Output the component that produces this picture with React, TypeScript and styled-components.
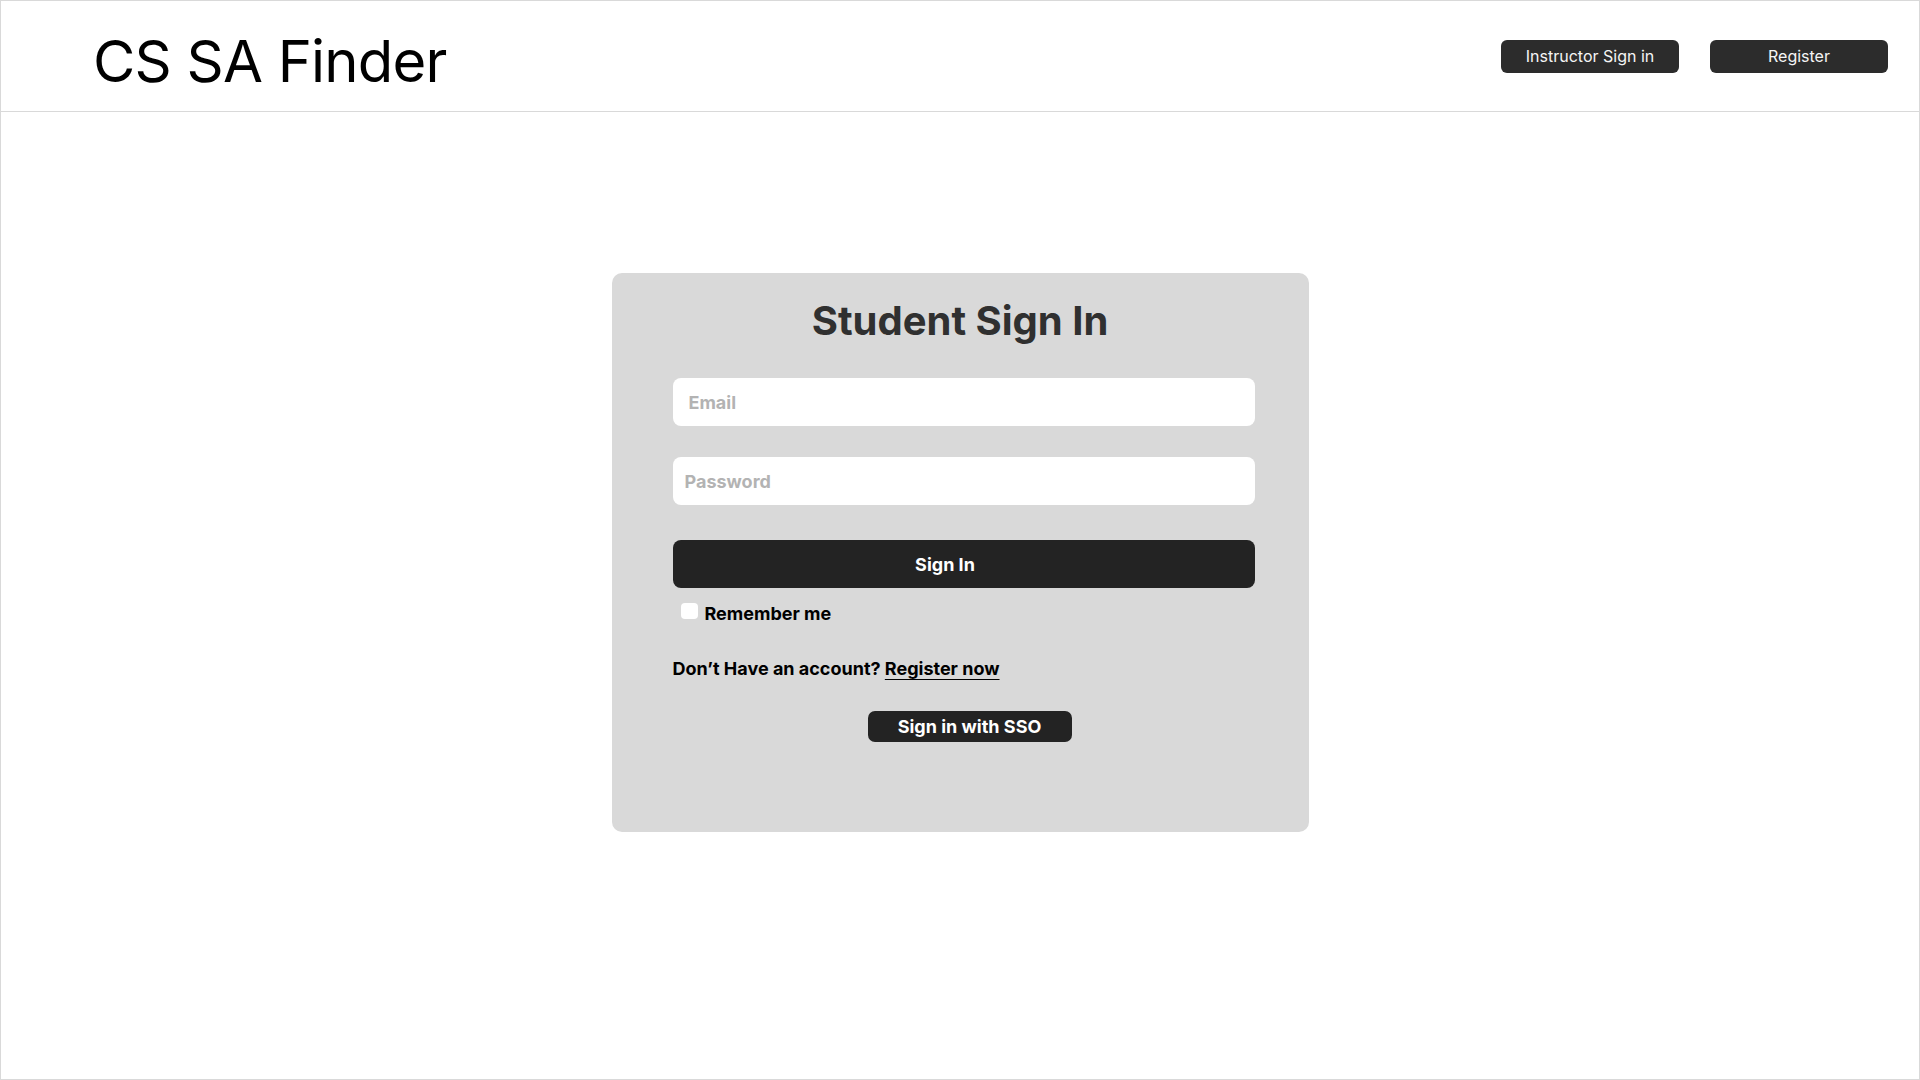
import React from "react";
import styled, { createGlobalStyle } from "styled-components";

const GlobalStyle = createGlobalStyle`
  html, body { margin: 0; padding: 0; background: #ffffff; }
  body { font-family: Inter, "Noto Sans", sans-serif; }
  * { box-sizing: border-box; }
`;

const Page = styled.div`
  width: 1920px;
  height: 1080px;
  border: 1px solid #d9d9d9;
  background: #ffffff;
  display: flex;
  flex-direction: column;
`;

const Header = styled.header`
  height: 111px;
  flex: none;
  border-bottom: 1px solid #d9d9d9;
  display: flex;
  align-items: center;
  justify-content: space-between;
  padding: 0 31px 0 92px;
`;

const Brand = styled.h1`
  margin: 0;
  font-family: Inter, sans-serif;
  font-weight: 400;
  font-size: 58px;
  color: #000000;
  letter-spacing: -0.8px;
  position: relative;
  top: 5px;
`;

const Nav = styled.nav`
  display: flex;
  gap: 31px;
`;

const NavButton = styled.button`
  width: 178px;
  height: 33px;
  border: none;
  border-radius: 6px;
  background: #2c2c2c;
  color: #f5f5f5;
  font-family: Inter, sans-serif;
  font-size: 16px;
  font-weight: 400;
  cursor: pointer;
`;

const Main = styled.main`
  flex: 1;
  display: flex;
  justify-content: center;
  padding-top: 161px;
`;

const Card = styled.section`
  width: 697px;
  height: 559px;
  background: #d9d9d9;
  border-radius: 10px;
  padding-top: 24px;
  display: flex;
  flex-direction: column;
`;

const CardTitle = styled.h2`
  margin: 0;
  text-align: center;
  font-family: Inter, sans-serif;
  font-weight: 700;
  font-size: 40px;
  line-height: 48px;
  color: #303030;
`;

const Form = styled.form`
  display: flex;
  flex-direction: column;
  padding: 0 54px 0 61px;
  margin-top: 33px;
`;

const Input = styled.input<{ $padLeft: number }>`
  height: 48px;
  border: none;
  border-radius: 8px;
  background: #ffffff;
  padding: 0 0 0 ${(p) => p.$padLeft}px;
  font-family: Inter, sans-serif;
  font-size: 18px;
  font-weight: 700;
  color: #1e1e1e;
  outline: none;
  & + & {
    margin-top: 31px;
  }
  &::placeholder {
    color: #b3b3b3;
  }
`;

const SubmitButton = styled.button`
  margin-top: 35px;
  height: 48px;
  border: none;
  border-radius: 8px;
  background: #232323;
  color: #ffffff;
  font-family: Inter, sans-serif;
  font-size: 18px;
  font-weight: 700;
  padding-right: 43px;
  cursor: pointer;
`;

const RememberRow = styled.label`
  display: flex;
  align-items: center;
  gap: 7px;
  margin-top: 15px;
  padding-left: 8px;
  font-family: Inter, sans-serif;
  font-size: 18px;
  font-weight: 700;
  color: #000000;
`;

const Check = styled.input`
  appearance: none;
  -webkit-appearance: none;
  width: 17px;
  height: 16px;
  margin: 0;
  border-radius: 4px;
  background: #ffffff;
  position: relative;
  top: -3px;
`;

const Prompt = styled.p`
  margin: 34px 0 0;
  font-family: Inter, sans-serif;
  font-size: 18px;
  font-weight: 700;
  color: #000000;
`;

const PromptLink = styled.a`
  color: #000000;
  text-decoration: underline;
  text-underline-offset: 4px;
`;

const SsoRow = styled.div`
  display: flex;
  justify-content: center;
  margin-top: 32px;
  padding-left: 12px;
`;

const SsoButton = styled.button`
  width: 204px;
  height: 31px;
  border: none;
  border-radius: 7px;
  background: #232323;
  color: #ffffff;
  font-family: Inter, sans-serif;
  font-size: 18px;
  font-weight: 700;
  cursor: pointer;
`;

export default function App() {
  return (
    <>
      <GlobalStyle />
      <Page>
        <Header>
          <Brand>CS SA Finder</Brand>
          <Nav>
            <NavButton type="button">Instructor Sign in</NavButton>
            <NavButton type="button">Register</NavButton>
          </Nav>
        </Header>
        <Main>
          <Card>
            <CardTitle>Student Sign In</CardTitle>
            <Form onSubmit={(e) => e.preventDefault()}>
              <Input $padLeft={16} type="email" placeholder="Email" />
              <Input $padLeft={12} type="password" placeholder="Password" />
              <SubmitButton type="submit">Sign In</SubmitButton>
              <RememberRow>
                <Check type="checkbox" />
                Remember me
              </RememberRow>
              <Prompt>
                Don’t Have an account? <PromptLink href="#">Register now</PromptLink>
              </Prompt>
              <SsoRow>
                <SsoButton type="button">Sign in with SSO</SsoButton>
              </SsoRow>
            </Form>
          </Card>
        </Main>
      </Page>
    </>
  );
}
